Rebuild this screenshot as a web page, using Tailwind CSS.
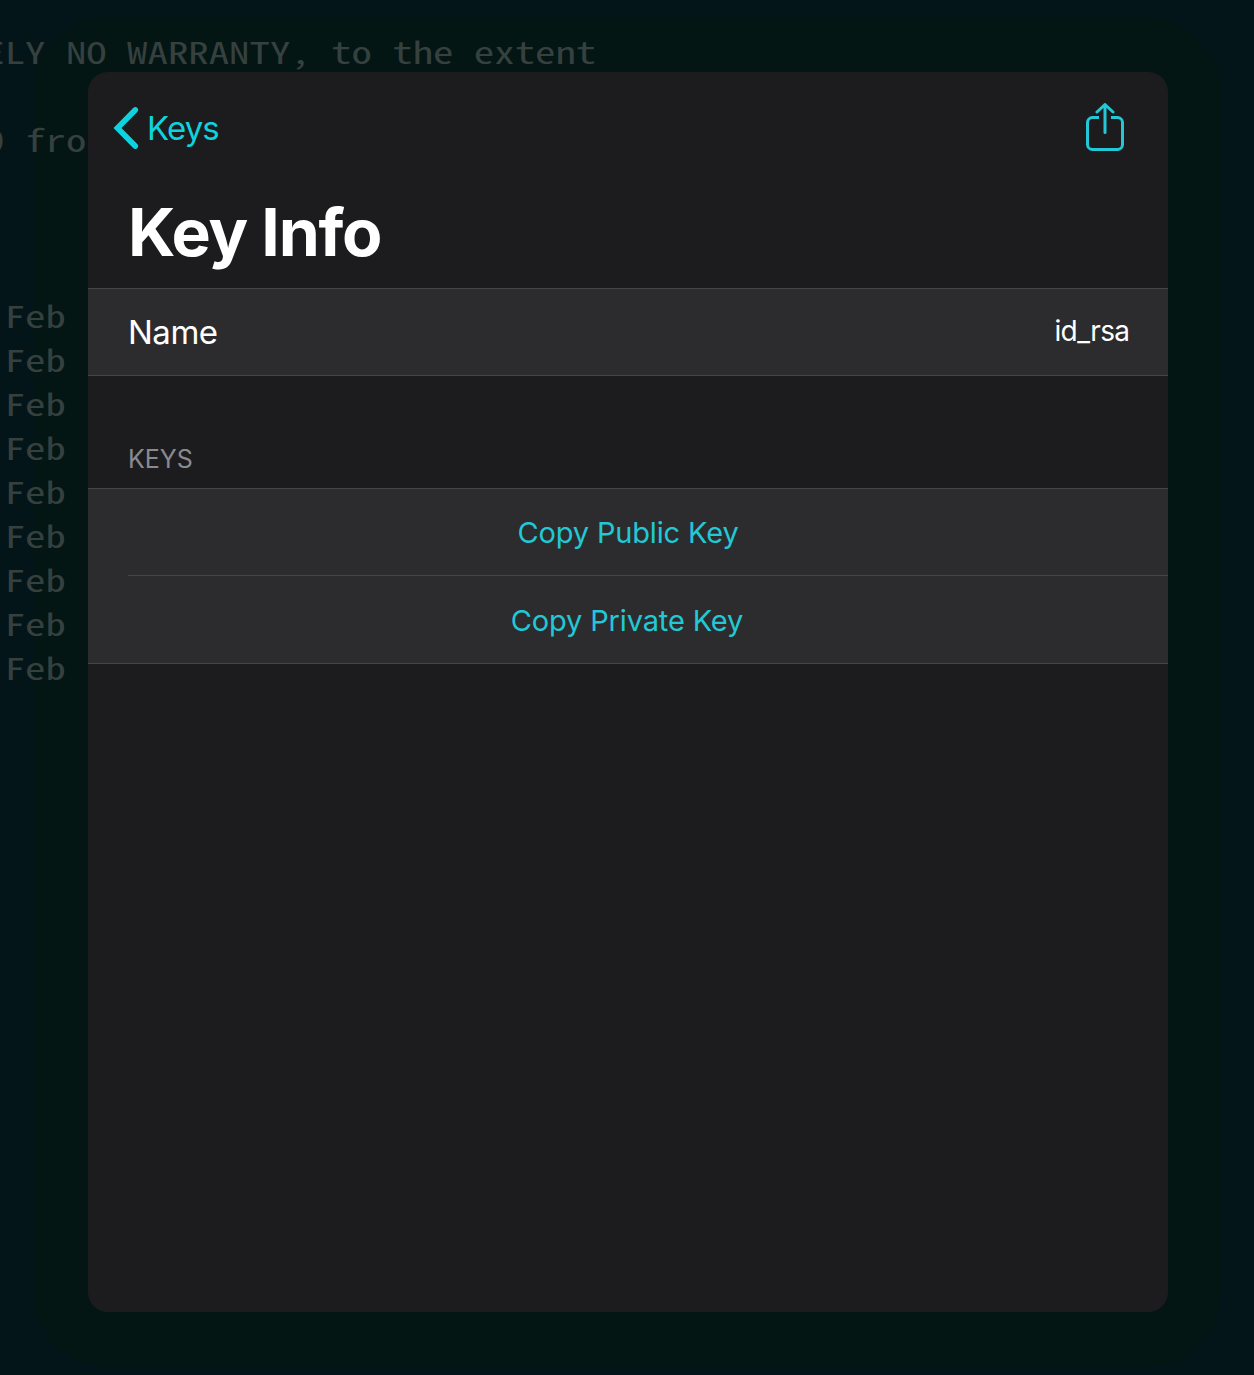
<!DOCTYPE html>
<html lang="en">
<head>
<meta charset="utf-8">
<title>Key Info</title>
<script src="https://cdn.jsdelivr.net/npm/@tailwindcss/browser@4"></script>
</head>
<body class="bg-[#031519]">
<div class="relative h-[1375px] w-[1254px] overflow-hidden bg-[#031519] px-[88px] pt-[72px] font-['Inter',sans-serif]">
  <!-- dimmed backdrop around the sheet -->
  <div class="absolute top-[17px] left-[33px] h-[1350px] w-[1188px] rounded-[75px] bg-[#031614]"></div>
  <!-- terminal output -->
  <pre class="absolute top-[28.6px] -left-[15.7px] origin-top scale-y-[0.745] font-['Noto_Sans_Mono_CJK_SC','DejaVu_Sans_Mono',monospace] text-[40.8px] leading-[59.06px] text-[#36403f]">ELY NO WARRANTY, to the extent

0 fro



 Feb
 Feb
 Feb
 Feb
 Feb
 Feb
 Feb
 Feb
 Feb</pre>

  <main class="relative flex h-[1240px] w-[1080px] flex-col overflow-hidden rounded-[20px] bg-[#1c1c1e] text-white">
    <nav class="flex h-[112px] items-center justify-between pr-[42px] pl-[24px]">
      <a class="flex items-center gap-[7px] text-[33px] text-[#0fd2df]">
        <svg class="h-[44px] w-[28px]" viewBox="0 0 28 44" fill="none" stroke="currentColor" stroke-width="5.700" stroke-linecap="round"><path d="M23.200 3.900 5.500 22l17.700 18.100"/></svg>
        <span class="leading-[40px] tracking-[-0.9px]">Keys</span>
      </a>
      <svg class="h-[50px] w-[42px] text-[#22c8d5]" viewBox="0 0 42 50" fill="none" stroke="currentColor" stroke-width="3" stroke-linecap="round" stroke-linejoin="round"><path stroke-linecap="butt" d="M15 14.500H8.500a5 5 0 0 0-5 5V41.500a5 5 0 0 0 5 5h25a5 5 0 0 0 5-5V19.500a5 5 0 0 0-5-5H27"/><path d="M21 29.500V1.800M13 9l8-7.500 8 7.500"/></svg>
    </nav>
    <h1 class="h-[104px] pt-[8px] pl-[40px] text-[66px] leading-[80px] font-bold tracking-[-1.25px]">Key Info</h1>
    <div class="flex h-[88px] items-center justify-between border-y border-[#454547] bg-[#2c2c2e] pr-[38.5px] pl-[40px]">
      <span class="text-[33px] leading-[40px] tracking-[-0.5px]">Name</span>
      <span class="pb-[2px] text-[28px] leading-[34px] tracking-[-0.6px]">id_rsa</span>
    </div>
    <h2 class="h-[112px] pt-[67px] pl-[40px] text-[25px] leading-[32px] text-[#8a8a8e]">KEYS</h2>
    <section class="flex h-[176px] flex-col border-y border-[#454547] bg-[#2c2c2e] text-[29px] tracking-[-0.15px] text-[#22c8d5]">
      <button class="relative h-[87px] pt-px">Copy Public Key<span class="absolute right-0 bottom-0 left-[40px] h-px bg-[#454547]"></span></button>
      <button class="h-[87px] pt-[2px] pr-[2px]">Copy Private Key</button>
    </section>
  </main>
</div>
</body>
</html>
